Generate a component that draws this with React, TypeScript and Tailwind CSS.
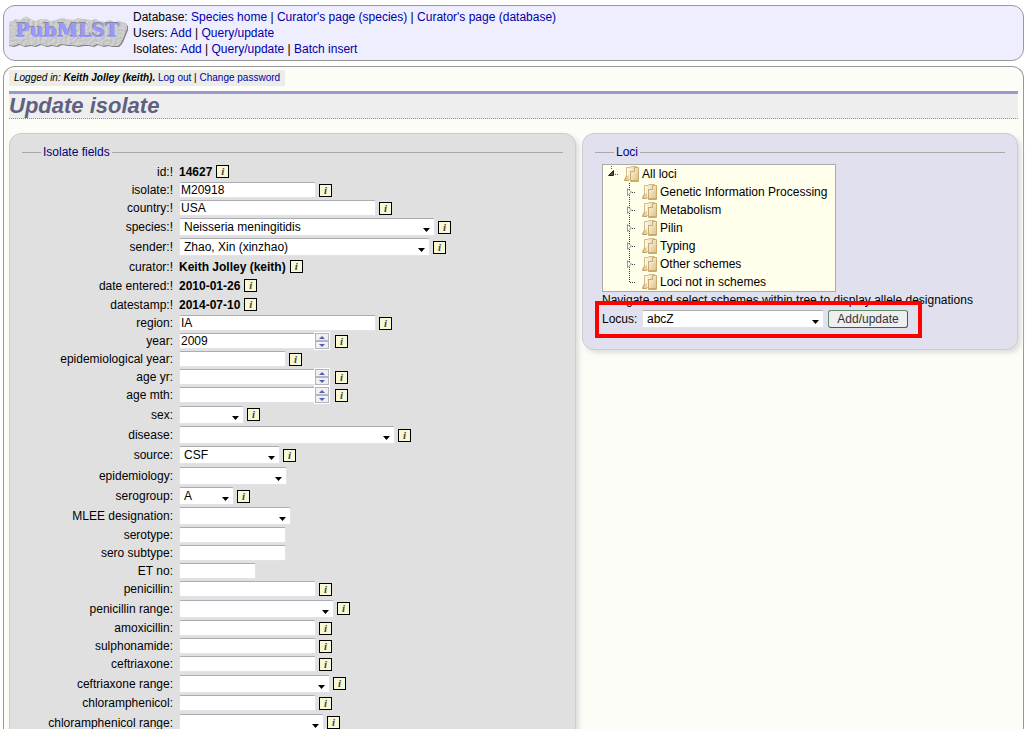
import type { ReactNode } from 'react';
import clsx from 'clsx';

type Field = {
  name: string;
  kind: 'static' | 'text' | 'number' | 'select';
  width?: string;
  value?: string;
  required?: boolean;
  info?: boolean;
  tall?: boolean;
};

const fields: Field[] = [
  { name: 'id', kind: 'static', value: '14627', required: true, info: true },
  { name: 'isolate', kind: 'text', width: 'w-[137px]', value: 'M20918', required: true, info: true },
  { name: 'country', kind: 'text', width: 'w-[197px]', value: 'USA', required: true, info: true },
  { name: 'species', kind: 'select', width: 'w-[256px]', value: 'Neisseria meningitidis', required: true, info: true },
  { name: 'sender', kind: 'select', width: 'w-[251px]', value: 'Zhao, Xin (xinzhao)', required: true, info: true },
  { name: 'curator', kind: 'static', value: 'Keith Jolley (keith)', required: true, info: true },
  { name: 'date entered', kind: 'static', value: '2010-01-26', required: true, info: true },
  { name: 'datestamp', kind: 'static', value: '2014-07-10', required: true, info: true },
  { name: 'region', kind: 'text', width: 'w-[197px]', value: 'IA', info: true },
  { name: 'year', kind: 'number', value: '2009', info: true },
  { name: 'epidemiological year', kind: 'text', width: 'w-[107px]', info: true },
  { name: 'age yr', kind: 'number', info: true },
  { name: 'age mth', kind: 'number', info: true },
  { name: 'sex', kind: 'select', width: 'w-[65px]', info: true, tall: true },
  { name: 'disease', kind: 'select', width: 'w-[216px]', info: true },
  { name: 'source', kind: 'select', width: 'w-[101px]', value: 'CSF', info: true },
  { name: 'epidemiology', kind: 'select', width: 'w-[108px]', tall: true },
  { name: 'serogroup', kind: 'select', width: 'w-[55px]', value: 'A', info: true },
  { name: 'MLEE designation', kind: 'select', width: 'w-[112px]' },
  { name: 'serotype', kind: 'text', width: 'w-[107px]' },
  { name: 'sero subtype', kind: 'text', width: 'w-[107px]' },
  { name: 'ET no', kind: 'text', width: 'w-[77px]' },
  { name: 'penicillin', kind: 'text', width: 'w-[137px]', info: true },
  { name: 'penicillin range', kind: 'select', width: 'w-[155px]', info: true, tall: true },
  { name: 'amoxicillin', kind: 'text', width: 'w-[137px]', info: true },
  { name: 'sulphonamide', kind: 'text', width: 'w-[137px]', info: true },
  { name: 'ceftriaxone', kind: 'text', width: 'w-[137px]', info: true },
  { name: 'ceftriaxone range', kind: 'select', width: 'w-[151px]', info: true, tall: true },
  { name: 'chloramphenicol', kind: 'text', width: 'w-[137px]', info: true },
  { name: 'chloramphenicol range', kind: 'select', width: 'w-[145px]', info: true, tall: true },
];

const schemes = ['Genetic Information Processing', 'Metabolism', 'Pilin', 'Typing', 'Other schemes', 'Loci not in schemes'];

const boxClass = 'rounded-[2px] border border-[#e2e3ea] border-t-[#abadb3] bg-white text-black outline-none';

const slab =
  'M3 5l3-2 5 1 3-2 3-2 4 3 6 2 5-2 5 0 4 2 6-1 5-2 6 1 6 1 5-2 6 1 7 1 5-1 3 2 6 1 4-2 6 2 4-1 3 1 2 0 3 3 0 4-2 5-2 5-2 4-3 3-6 0-5-1-4 1-6-2-4 2-5-1-5 0-5 1-6-1-5 0-6-1-4 2-6-1-5 1-6-2-5 2-5-1-6 1-5-2-6 2-5-1-4 0-3-3 0-4 1-4-3-5 1-5z';

function Link({ children }: { children: ReactNode }) {
  return (
    <a href="#" className="text-[#0000a8] hover:underline">
      {children}
    </a>
  );
}

function Logo() {
  return (
    <svg className="shrink-0" width="121" height="34" viewBox="0 0 121 34" role="img" aria-label="PubMLST">
      <defs>
        <filter id="stone" x="0" y="0" width="100%" height="100%" colorInterpolationFilters="sRGB">
          <feTurbulence type="fractalNoise" baseFrequency="0.4" numOctaves="2" seed="4" result="noise" />
          <feDiffuseLighting in="noise" surfaceScale="0.4" diffuseConstant="1.15" lightingColor="#cccccc" result="lit">
            <feDistantLight azimuth="225" elevation="60" />
          </feDiffuseLighting>
          <feComposite in="lit" in2="SourceGraphic" operator="in" />
        </filter>
      </defs>
      <path d={slab} transform="translate(1 3)" fill="#808080" />
      <path d={slab} transform="translate(0 2)" fill="#c8c8c8" filter="url(#stone)" />
      <g fontFamily="DejaVu Serif, serif" fontWeight="bold" fontSize="19">
        <text x="6" y="22" fill="#88889c">
          PubMLST
        </text>
        <text x="7" y="23" fill="#9999ff">
          PubMLST
        </text>
      </g>
    </svg>
  );
}

function Info({ name }: { name: string }) {
  return (
    <button
      type="button"
      aria-label={`About ${name}`}
      className="flex size-[13px] shrink-0 items-center justify-center border border-black bg-[#f8f8d5] font-['Liberation_Serif',serif] text-[11px] leading-[11px] font-bold text-[#444] italic"
    >
      i
    </button>
  );
}

function Select({ id, width, value }: { id: string; width: string; value?: string }) {
  return (
    <span className={clsx('relative block', width)}>
      <select id={id} defaultValue={value ?? ''} className={clsx(boxClass, 'block h-[18px] w-full appearance-none pr-4 pl-1 leading-4')}>
        <option value={value ?? ''}>{value ?? ''}</option>
      </select>
      <svg className="pointer-events-none absolute right-[5px] bottom-1" width="7" height="4" viewBox="0 0 7 4" aria-hidden="true">
        <path d="M0 0h7L3.500 4z" fill="#000" />
      </svg>
    </span>
  );
}

function Stepper({ name }: { name: string }) {
  const button = 'flex h-2 w-[14px] items-center justify-center border border-[#b4b4bc] bg-[#f0f0f4]';
  return (
    <span className="mr-0.5 -ml-0.5 flex flex-col border border-white bg-white">
      <button type="button" className={button} aria-label={`Increase ${name}`}>
        <svg width="6" height="3" viewBox="0 0 6 3" aria-hidden="true">
          <path d="M3 0l3 3H0z" fill="#4c62b0" />
        </svg>
      </button>
      <button type="button" className={button} aria-label={`Decrease ${name}`}>
        <svg width="6" height="3" viewBox="0 0 6 3" aria-hidden="true">
          <path d="M3 3l3-3H0z" fill="#4c62b0" />
        </svg>
      </button>
    </span>
  );
}

function Control({ field, id }: { field: Field; id: string }) {
  const { kind, name, value, width = 'w-[137px]' } = field;
  if (kind === 'static') {
    return (
      <output id={id} className="font-bold">
        {value}
      </output>
    );
  }
  if (kind === 'select') return <Select id={id} width={width} value={value} />;
  return (
    <span className="flex items-center">
      <input
        id={id}
        type={kind}
        defaultValue={value}
        className={clsx(boxClass, width, 'h-4 px-px leading-[14px] [appearance:textfield] [&::-webkit-inner-spin-button]:hidden')}
      />
      {kind === 'number' && <Stepper name={name} />}
    </span>
  );
}

function FieldRow({ field }: { field: Field }) {
  const id = field.name.replace(/ /g, '_');
  const height = field.kind === 'select' ? (field.tall ? 'h-[21px]' : 'h-5') : field.kind === 'static' ? 'h-[19px]' : 'h-[18px]';
  return (
    <li className={clsx('flex items-center gap-1.5', height)}>
      <label htmlFor={id} className="w-[151px] shrink-0 text-right">
        {field.name}:{field.required && '!'}
      </label>
      <span className={clsx('flex items-center', field.kind === 'static' ? 'gap-1' : 'gap-[3px]')}>
        <Control field={field} id={id} />
        {field.info && <Info name={field.name} />}
      </span>
    </li>
  );
}

function Panel({ className, title, children }: { className: string; title: string; children: ReactNode }) {
  return (
    <section className={clsx('rounded-xl border border-[#ccc] px-3 pt-2.5 pb-3 shadow-[3px_3px_5px_#ddd]', className)}>
      <fieldset className="border-t border-[#a9a9a9]">
        <legend className="ml-[19px] px-0.5 text-[#000080]">{title}</legend>
        {children}
      </fieldset>
    </section>
  );
}

function FolderIcon() {
  return (
    <svg className="shrink-0" width="15" height="16" viewBox="0 0 15 16" aria-hidden="true">
      <defs>
        <linearGradient id="folder-front" x1="0" y1="0" x2="1" y2="1">
          <stop offset="0" stopColor="#fdf6e2" />
          <stop offset="1" stopColor="#dcc28c" />
        </linearGradient>
        <linearGradient id="folder-back" x1="0" y1="0" x2="1" y2="0">
          <stop offset="0" stopColor="#fdf8e8" />
          <stop offset="1" stopColor="#ead9b0" />
        </linearGradient>
      </defs>
      {/* back cover */}
      <path d="M2 2q0-1 1-1h3l1-1h5q1 0 1 1v13H2z" fill="#d6bc84" />
      <path d="M3 2h3l1-1h5v12H3z" fill="url(#folder-back)" />
      {/* flap at the lower left */}
      <path d="M2 10h1v2l-1 2h3v1H1q-1 0-1-1z" fill="#c2a265" />
      <path d="M3 10l2-1v5H1.500z" fill="#e6d2a0" />
      {/* front cover */}
      <path d="M6 5h4V2q0-1 1-1h3q1 0 1 1v13q0 1-1 1H7q-1 0-1-1z" fill="#c9ab6d" />
      <path d="M7 6h3q1 0 1-1V2h3v12H7z" fill="url(#folder-front)" />
    </svg>
  );
}

function Tree() {
  return (
    <ul className="w-[234px] border border-[#aaa] bg-[#ffffec]">
      <li>
        <div className="flex h-[18px] items-center">
          <svg className="shrink-0" width="21" height="18" viewBox="0 0 21 18" aria-hidden="true">
            <path d="M8.500 1v4M12 9.500h4" stroke="#555" strokeDasharray="1 1" />
            <path d="M10.500 5.500v5h-5z" fill="#555" stroke="#222" />
          </svg>
          <FolderIcon />
          <a href="#" className="ml-[3px]">
            All loci
          </a>
        </div>
        <ul>
          {schemes.map((scheme, i) => {
            const last = i === schemes.length - 1;
            return (
              <li key={scheme} className="flex h-[18px] items-center pl-[18px]">
                <svg className="shrink-0" width="21" height="18" viewBox="0 0 21 18" aria-hidden="true">
                  <path d={last ? 'M8.500 0v9' : 'M8.500 0v18'} stroke="#444" strokeDasharray="1 1" />
                  <path d="M9 9.500h6" stroke="#444" strokeDasharray="1 1" />
                  {!last && <path d="M6.500 5.500v7l4-3.500z" fill="#fff" stroke="#999" />}
                </svg>
                <FolderIcon />
                <a href="#" className="ml-[3px] whitespace-nowrap">
                  {scheme}
                </a>
              </li>
            );
          })}
        </ul>
      </li>
    </ul>
  );
}

export default function App() {
  return (
    <div className="h-screen overflow-hidden bg-white px-[3px] pt-[5px] font-['Liberation_Sans',Arial,sans-serif] text-[12px] leading-4 text-black">
      <header className="mb-[5px] flex rounded-xl border border-[#999] bg-[#eeeeff] py-[3px] pl-[5px]">
        <div className="pt-[5px] pr-[3px]">
          <Logo />
        </div>
        <nav>
          <p>
            Database: <Link>Species home</Link> | <Link>Curator's page (species)</Link> | <Link>Curator's page (database)</Link>
          </p>
          <p>
            Users: <Link>Add</Link> | <Link>Query/update</Link>
          </p>
          <p>
            Isolates: <Link>Add</Link> | <Link>Query/update</Link> | <Link>Batch insert</Link>
          </p>
        </nav>
      </header>

      <main className="rounded-t-xl border border-b-0 border-[#999] bg-[#fdfdf8] px-[5px] pt-[3px]">
        <p className="w-fit bg-[#ecece8] px-[5px] text-[10px]">
          <i>
            Logged in: <b>Keith Jolley (keith).</b>
          </i>{' '}
          <Link>Log out</Link> | <Link>Change password</Link>
        </p>
        <h1 className="mt-[5px] mb-3.5 border-t-3 border-b border-t-[#9999cc] border-b-[#8888bb] bg-[#eee] text-[22px] leading-6 font-bold text-[#606080] italic [border-bottom-style:dotted]">
          Update isolate
        </h1>

        <form className="grid grid-cols-[567fr_436fr] items-start gap-1.5" onSubmit={(e) => e.preventDefault()}>
          <Panel title="Isolate fields" className="bg-[#e0e0e0]">
            <ul className="pt-0.5">
              {fields.map((field) => (
                <FieldRow key={field.name} field={field} />
              ))}
            </ul>
          </Panel>

          <Panel title="Loci" className="bg-[#e0e0ee]">
            <div className="px-[7px] pt-1 pb-[9px]">
              <Tree />
              <p className="whitespace-nowrap">Navigate and select schemes within tree to display allele designations</p>
              <div className="relative mt-0.5 flex w-fit items-center">
                <label htmlFor="locus" className="w-10">
                  Locus:
                </label>
                <Select id="locus" width="w-[182px]" value="abcZ" />
                <button className="ml-1 h-[18px] w-20 rounded-[3px] border border-[#5c8f66] border-r-[#2f6b3a] border-b-[#2f6b3a] bg-[#eee] leading-4 text-[#333]">
                  Add/update
                </button>
                <div className="pointer-events-none absolute -top-[9px] -right-3.5 -bottom-2.5 -left-[7px] border-4 border-[#f00]" />
              </div>
            </div>
          </Panel>
        </form>
      </main>
    </div>
  );
}
